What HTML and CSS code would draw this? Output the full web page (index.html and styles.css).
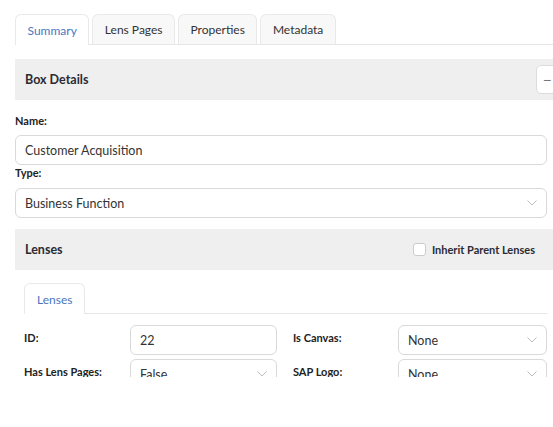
FILE: index.html
```html
<!DOCTYPE html>
<html lang="en">

<head>
    <meta charset="UTF-8">
    <meta name="viewport" content="width=device-width, initial-scale=1.0">
    <title>Box Editor</title>
    <link rel="stylesheet" href="styles.css">
</head>

<body>
    <div class="panel">
        <div class="tabs">
            <div class="tab active">Summary</div>
            <div class="tab">Lens Pages</div>
            <div class="tab">Properties</div>
            <div class="tab">Metadata</div>
        </div>

        <div class="section-header">
            <span>Box Details</span>
            <button class="collapse">&minus;</button>
        </div>

        <div class="field">
            <label>Name:</label>
            <div class="input">Customer Acquisition</div>
        </div>
        <div class="field">
            <label>Type:</label>
            <div class="input select">
                <span>Business Function</span>
                <svg class="chev" width="10" height="6" viewBox="0 0 10 6"><polyline points="0.5,0.5 5,5 9.5,0.5" /></svg>
            </div>
        </div>

        <div class="section-header lenses">
            <span>Lenses</span>
            <label class="check"><span class="box"></span>Inherit Parent Lenses</label>
        </div>

        <div class="inner">
            <div class="tabs small">
                <div class="tab active">Lenses</div>
            </div>

            <div class="grid">
                <div class="glabel">ID:</div>
                <div class="input">22</div>
                <div class="glabel">Is Canvas:</div>
                <div class="input select">
                    <span>None</span>
                    <svg class="chev" width="10" height="6" viewBox="0 0 10 6"><polyline points="0.5,0.5 5,5 9.5,0.5" /></svg>
                </div>

                <div class="glabel">Has Lens Pages:</div>
                <div class="input select">
                    <span>False</span>
                    <svg class="chev" width="10" height="6" viewBox="0 0 10 6"><polyline points="0.5,0.5 5,5 9.5,0.5" /></svg>
                </div>
                <div class="glabel">SAP Logo:</div>
                <div class="input select">
                    <span>None</span>
                    <svg class="chev" width="10" height="6" viewBox="0 0 10 6"><polyline points="0.5,0.5 5,5 9.5,0.5" /></svg>
                </div>
            </div>
        </div>
    </div>
</body>

</html>
```

FILE: styles.css
```css
body {
    margin: 0;
    padding: 0;
    background: #fff;
    font-family: 'Lato', 'Open Sans', sans-serif;
    color: #2b2b33;
    overflow: hidden;
}

.panel {
    width: 532px;
    height: 363px;
    margin: 14px 0 0 15px;
    clip-path: inset(0 -40px 0 0);
}

.tabs {
    display: flex;
    gap: 3px;
    border-bottom: 1px solid #e6e6e6;
    margin-right: -30px;
}

.tab {
    height: 29px;
    padding: 0 11.5px;
    display: flex;
    align-items: center;
    font-size: 12px;
    color: #333;
    background: #f8f8f8;
    border: 1px solid #e9e9e9;
    border-bottom: none;
    border-radius: 6px 6px 0 0;
}

.tab.active {
    background: #fff;
    color: #4a76c1;
    margin-bottom: -1px;
    height: 30px;
}

.section-header {
    margin-top: 14px;
    margin-right: -40px;
    height: 41px;
    background: #efefef;
    display: flex;
    align-items: center;
    justify-content: space-between;
    padding: 0 10px;
    font-size: 12.5px;
    font-weight: bold;
}

.collapse {
    width: 30px;
    height: 29px;
    margin-right: 11px;
    background: #fff;
    border: 1px solid #dcdcdc;
    border-radius: 5px;
    color: #777;
    font-size: 14px;
    text-align: left;
    padding: 0 0 0 6px;
}

.field label {
    display: block;
    font-size: 11px;
    font-weight: bold;
    color: #222;
    line-height: 14px;
}

.section-header + .field label {
    margin-top: 14px;
    margin-bottom: 7px;
}

.field + .field label {
    margin-top: 1px;
    margin-bottom: 8px;
}

.input {
    height: 28px;
    border: 1px solid #d9d9d9;
    border-radius: 6px;
    padding: 0 9px;
    display: flex;
    align-items: center;
    justify-content: space-between;
    font-size: 12.5px;
    color: #333;
    background: #fff;
}

.chev {
    fill: none;
    stroke: #bdbdbd;
    stroke-width: 1;
}

.section-header.lenses {
    margin-top: 11px;
    padding-right: 52px;
}

.check {
    display: flex;
    align-items: center;
    gap: 6px;
    font-size: 11px;
}

.check .box {
    width: 11px;
    height: 11px;
    background: #fff;
    border: 1px solid #ccc;
    border-radius: 3px;
}

.inner {
    padding: 13px 0 0 9px;
}

.tabs.small {
    margin-right: 0;
}

.tabs.small .tab {
    padding: 0 12px;
}

.grid {
    display: grid;
    grid-template-columns: 106px 147px 121px 149px;
    row-gap: 4px;
    margin-top: 11px;
}

.grid .glabel {
    font-size: 11px;
    font-weight: bold;
    color: #222;
    padding-top: 6px;
}

.grid .glabel:nth-child(4n+3) {
    padding-left: 16px;
}
```
